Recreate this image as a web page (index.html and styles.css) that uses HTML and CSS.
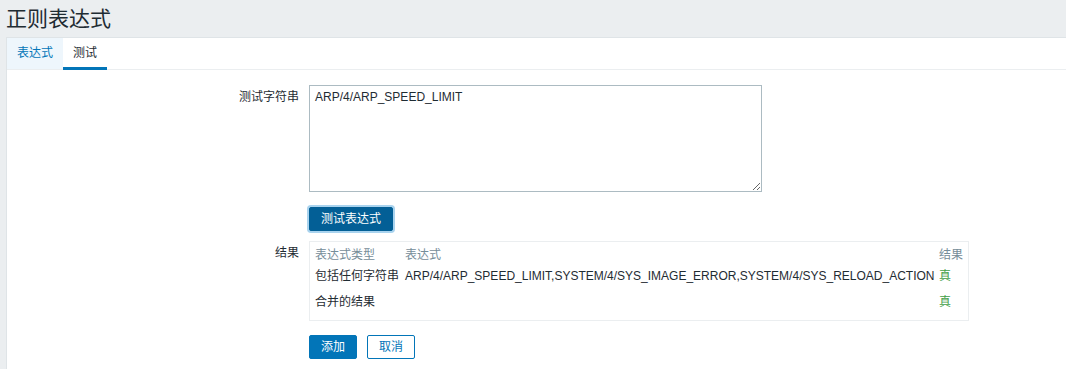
FILE: index.html
```html
<!DOCTYPE html>
<html lang="zh-CN">
<head>
    <meta charset="UTF-8">
    <meta name="viewport" content="width=device-width, initial-scale=1.0">
    <title>正则表达式</title>
    <link rel="stylesheet" href="styles.css">
</head>
<body>
    <header class="page-header">
        <h1 class="page-title">正则表达式</h1>
    </header>

    <main class="panel">
        <ul class="tabs">
            <li class="tab">表达式</li>
            <li class="tab tab-active">测试</li>
        </ul>

        <div class="tab-content">
            <div class="form-row">
                <label class="form-label" for="test-string">测试字符串</label>
                <div class="form-field">
                    <textarea id="test-string" class="test-input">ARP/4/ARP_SPEED_LIMIT</textarea>
                </div>
            </div>

            <div class="form-row row-button">
                <div class="form-label"></div>
                <div class="form-field">
                    <button class="btn btn-focus">测试表达式</button>
                </div>
            </div>

            <div class="form-row row-result">
                <div class="form-label">结果</div>
                <div class="form-field">
                    <div class="result-box">
                        <div class="result-grid">
                            <span class="cell head">表达式类型</span>
                            <span class="cell head">表达式</span>
                            <span class="cell head">结果</span>

                            <span class="cell row1">包括任何字符串</span>
                            <span class="cell row1">ARP/4/ARP_SPEED_LIMIT,SYSTEM/4/SYS_IMAGE_ERROR,SYSTEM/4/SYS_RELOAD_ACTION</span>
                            <span class="cell row1 ok">真</span>

                            <span class="cell row2">合并的结果</span>
                            <span class="cell row2"></span>
                            <span class="cell row2 ok">真</span>
                        </div>
                    </div>
                </div>
            </div>

            <div class="form-row row-actions">
                <div class="form-label"></div>
                <div class="form-field actions">
                    <button class="btn">添加</button>
                    <button class="btn btn-alt">取消</button>
                </div>
            </div>
        </div>
    </main>
</body>
</html>
```

FILE: styles.css
```css
html, body {
    margin: 0;
    padding: 0;
}
body {
    font-family: 'Liberation Sans', Arial, 'Noto Sans CJK SC', sans-serif;
    font-size: 12px;
    line-height: 14px;
    color: #1f2c33;
    background-color: #ebeef0;
    overflow: hidden;
}
.page-header {
    height: 37px;
    display: flex;
    align-items: center;
    padding-left: 6px;
}
.page-title {
    margin: 0;
    font-size: 21px;
    font-weight: normal;
    line-height: 24px;
    color: #1f2c33;
}
.panel {
    margin-left: 6px;
    background-color: #ffffff;
    border-top: 1px solid #dfe4e7;
    border-left: 1px solid #dfe4e7;
    min-height: 340px;
}

/* tabs */
.tabs {
    list-style: none;
    margin: 0;
    padding: 0;
    display: flex;
    height: 31px;
    border-bottom: 1px solid #ebeef0;
}
.tab {
    padding: 0 10px;
    line-height: 31px;
    color: #0275b8;
    background-color: #eef6fc;
}
.tab-active {
    color: #1f2c33;
    background-color: #ffffff;
    box-shadow: inset 0 -3px 0 #0275b8;
    height: 32px;
}

/* form */
.tab-content {
    padding: 15px 0 10px;
}
.form-row {
    display: flex;
    align-items: flex-start;
}
.form-label {
    width: 292px;
    padding: 5px 10px 0 0;
    text-align: right;
    flex-shrink: 0;
}
.row-button {
    margin-top: 15px;
}
.row-result {
    margin-top: 10px;
}
.row-actions {
    margin-top: 14px;
}
.test-input {
    display: block;
    box-sizing: border-box;
    width: 453px;
    height: 107px;
    margin: 0;
    padding: 4px 5px;
    border: 1px solid #acbbc2;
    border-radius: 0;
    font-family: 'Liberation Sans', Arial, 'Noto Sans CJK SC', sans-serif;
    font-size: 12px;
    line-height: 14px;
    color: #1f2c33;
    background-color: #ffffff;
    outline: none;
}

/* buttons */
.btn {
    box-sizing: border-box;
    height: 24px;
    padding: 0 11px;
    border: 1px solid #0275b8;
    border-radius: 2px;
    background-color: #0275b8;
    color: #ffffff;
    font-family: 'Liberation Sans', Arial, 'Noto Sans CJK SC', sans-serif;
    font-size: 12px;
    line-height: 22px;
    cursor: pointer;
}
.btn-focus {
    background-color: #035f96;
    border-color: #035f96;
    box-shadow: 0 0 0 2px #a9d3ee;
}
.btn-alt {
    background-color: #ffffff;
    color: #0275b8;
}
.actions {
    display: flex;
    gap: 10px;
}

/* result table */
.result-box {
    box-sizing: border-box;
    width: 660px;
    border: 1px solid #ebeef0;
    padding: 0 5px;
}
.result-grid {
    display: grid;
    grid-template-columns: 90px 1fr auto;
}
.cell {
    white-space: nowrap;
}
.head {
    color: #768d99;
    padding: 6px 0 3px;
}
.row1 {
    padding: 4px 0 6px;
}
.row2 {
    padding: 6px 0 11px;
}
.ok {
    color: #429e47;
}
```
